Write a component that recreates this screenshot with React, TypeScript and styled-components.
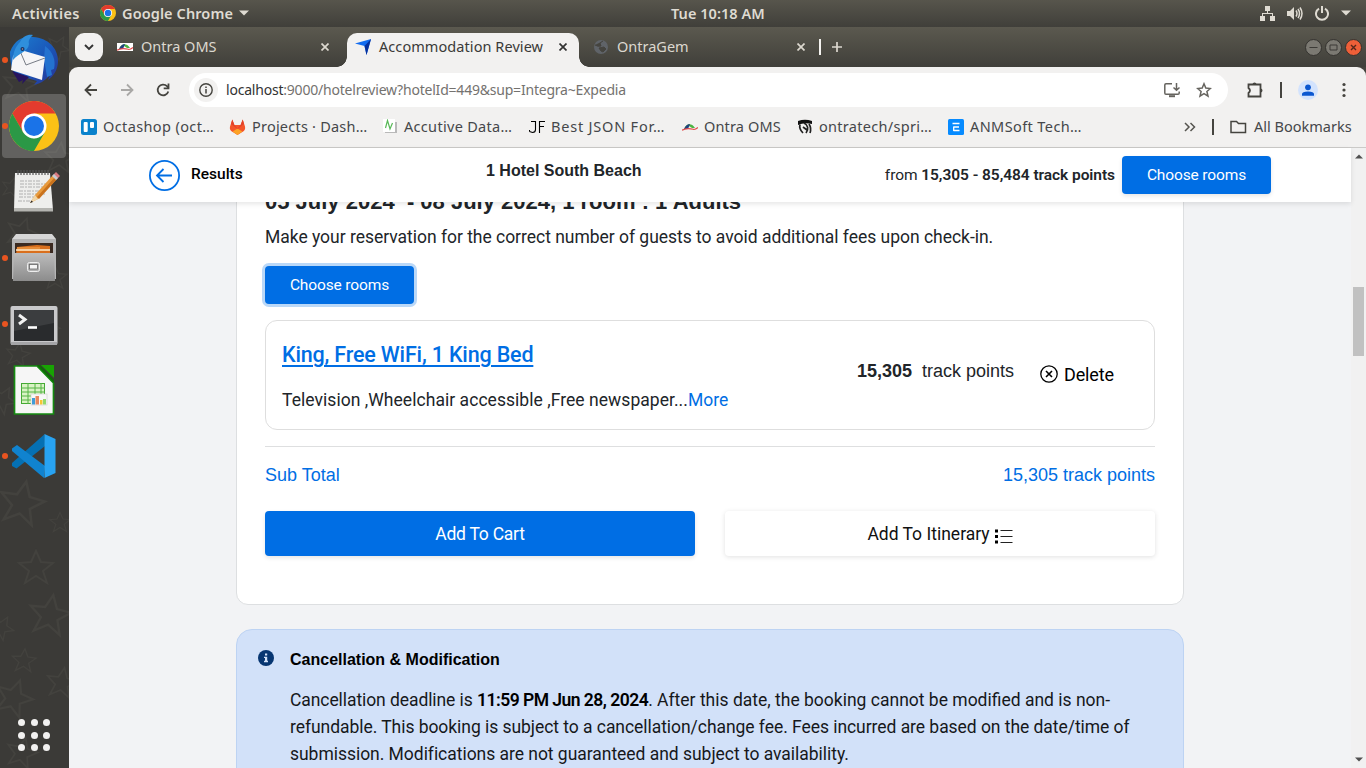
import React from "react";
import styled, { createGlobalStyle, css } from "styled-components";

const ui = `"Noto Sans", "Open Sans", sans-serif`;
const brand = `Roboto, sans-serif`;
const arial = `"Liberation Sans", Arial, sans-serif`;
const blue = "#006ee4";

const Global = createGlobalStyle`
  *{box-sizing:border-box}
  html,body{margin:0;height:768px;overflow:hidden;background:#3b3a37}
  button{font:inherit;border:0;padding:0;background:none;color:inherit}
  svg{display:block;flex:none}
  h2,h3,p{margin:0}
`;

const Desktop = styled.div`
  width:1366px;height:768px;display:flex;flex-direction:column;overflow:hidden;
  font-family:${ui};
`;

const SystemBar = styled.header`
  height:27px;flex:none;display:grid;grid-template-columns:659px auto 1fr;align-items:center;
  padding:0 15px 1px 12px;background:linear-gradient(#57554c,#403f3a);color:#dfdbd2;
  font-size:14.5px;font-weight:600;line-height:25px;
`;
const SystemGroup = styled.div<{ $end?: boolean; $gap: number }>`
  display:flex;align-items:center;gap:${p => p.$gap}px;
  justify-content:${p => (p.$end ? "flex-end" : "flex-start")};
`;
const Label = styled.span<{ $ls?: number; $w?: number }>`
  letter-spacing:${p => p.$ls ?? 0}px;white-space:pre;flex:none;
  ${p => p.$w && css`width:${p.$w}px;`}
`;
const Workspace = styled.div`flex:1;display:flex;min-height:0;`;

const Dock = styled.nav`
  width:69px;flex:none;position:relative;display:flex;flex-direction:column;background:#3b3a37;padding-top:1px;
`;
const Wallpaper = styled.svg`position:absolute;left:0;top:0;`;
const DockItem = styled.div<{ $active?: boolean; $pad?: string }>`
  position:relative;width:64px;height:64px;margin:0 0 2px 2px;border-radius:4px;flex:none;
  display:flex;align-items:center;justify-content:center;padding:${p => p.$pad ?? 0};
  background:${p => (p.$active ? "rgba(255,255,255,.2)" : "transparent")};
`;
const RunningDot = styled.i`
  position:absolute;left:0;top:29px;width:6px;height:6px;border-radius:50%;background:#e95420;
`;
const AppsGrid = styled.div`
  position:relative;margin:auto 0 17px 18px;display:grid;grid-template-columns:repeat(3,7px);gap:5.5px;
`;
const AppsDot = styled.i`width:7px;height:7px;border-radius:50%;background:#f2f1f0;`;

const Browser = styled.main`flex:1;min-width:0;display:flex;flex-direction:column;background:#45433d;`;
const TabStrip = styled.div`
  height:40px;flex:none;display:flex;align-items:center;background:linear-gradient(#5b594f,#403f3a);
  padding-left:6px;color:#dcd8cf;font-size:14.5px;
`;
const TabSearch = styled.button`
  width:28px;height:28px;border-radius:9px;background:#f2f1f0;display:flex;align-items:center;justify-content:center;
`;
const TabTitle = styled(Label)`padding-bottom:2px;`;
const Tab = styled.div<{ $w: number; $active?: boolean }>`
  width:${p => p.$w}px;height:34px;margin-top:6px;display:flex;align-items:center;position:relative;padding-bottom:6px;
  ${p => p.$active && css`
    background:#f2f1f0;color:#3a3a38;border-radius:10px 10px 0 0;
    &::before,&::after{content:"";position:absolute;bottom:0;width:10px;height:10px}
    &::before{left:-10px;background:radial-gradient(circle at 0 0,transparent 9.5px,#f2f1f0 10px)}
    &::after{right:-10px;background:radial-gradient(circle at 100% 0,transparent 9.5px,#f2f1f0 10px)}
  `}
`;
const TabIcon = styled.span<{ $left: number }>`width:16px;margin:0 8px 0 ${p => p.$left}px;flex:none;`;
const TabClose = styled.span<{ $right: number }>`margin-left:auto;margin-right:${p => p.$right}px;`;
const Bar = styled.i<{ $c: string; $m: string }>`
  width:2px;height:16px;background:${p => p.$c};margin:${p => p.$m};flex:none;
`;
const WindowControls = styled.div`margin-left:auto;margin-right:4px;display:flex;gap:3px;`;

const Chrome = styled.div`
  flex:none;height:81px;background:#f2f1f0;border-bottom:1px solid #cbcac8;border-radius:9px 9px 0 0;
`;
const Toolbar = styled.div`height:46px;display:flex;align-items:center;padding-left:14px;`;
const NavIcons = styled.div`display:flex;gap:20px;width:106px;flex:none;`;
const AddressBar = styled.div`
  width:1039px;height:34px;border-radius:17px;background:#fff;display:flex;align-items:center;flex:none;
  padding:0 16px 0 5px;margin-right:19px;color:#74726f;font-size:14px;
  ${Label}{padding-bottom:2px}
`;
const SiteInfo = styled.span`
  width:24px;height:24px;border-radius:50%;background:#f2f1f0;display:flex;align-items:center;justify-content:center;margin-right:8px;
`;
const HostName = styled.span`color:#333;`;
const AddressActions = styled.div`margin-left:auto;display:flex;gap:15px;`;
const Bookmarks = styled.div`
  height:34px;display:flex;align-items:center;padding:0 0 6px 12px;color:#45474a;font-size:14.5px;
  ${Label}{padding-bottom:2px}
`;
const Bookmark = styled.div<{ $w: number }>`width:${p => p.$w}px;flex:none;display:flex;align-items:center;gap:6px;`;

const Viewport = styled.div`flex:1;min-height:0;display:flex;`;
const Page = styled.div`width:1282px;display:flex;flex-direction:column;background:#f2f3f5;color:#212529;font-family:${brand};`;
const PageHeader = styled.header`
  height:54px;flex:none;background:#fff;position:relative;z-index:1;box-shadow:0 2px 5px rgba(0,0,0,.1);
  display:grid;grid-template-columns:337px 1fr auto;align-items:center;padding:0 80px;
`;
const BackLink = styled.div`
  display:flex;align-items:center;gap:11px;color:#000;font-weight:500;font-size:15.5px;line-height:20px;
  ${Label}{margin-top:-3px}
`;
const HotelName = styled.h2`font:bold 16px/20px ${arial};margin-top:-9px;`;
const HeaderPrice = styled.div`display:flex;align-items:center;font-size:15.5px;gap:7px;white-space:pre;b{font-weight:600}`;
const Button = styled.button<{ $kind?: "wide" | "light"; $focus?: boolean }>`
  display:flex;align-items:center;justify-content:center;gap:4px;color:#fff;background:${blue};border-radius:4px;
  width:149px;height:38px;font-size:15.5px;box-shadow:0 2px 4px rgba(0,0,0,.1);
  ${p => p.$kind && css`width:auto;flex:1;height:45px;font-size:17.5px;`}
  ${p => p.$kind === "light" && css`background:#fff;color:#111;box-shadow:0 1px 5px rgba(0,0,0,.12);`}
  ${p => p.$focus && css`box-shadow:0 0 0 3px #bad8f8;`}
`;
const ListIcon = styled.svg`margin-top:4px;`;
const Scroll = styled.div`flex:1;min-height:0;overflow:hidden;padding-left:167px;`;
const StayCard = styled.section`
  width:948px;height:424px;margin-top:-21px;background:#fff;border:1px solid #dddfe1;border-radius:12px;padding:7px 28px;
`;
const StayDates = styled.h2`font:bold 22px/26px ${arial};white-space:pre;`;
const Note = styled.p`font-size:17.5px;line-height:24px;margin:10px 0 17px;white-space:nowrap;`;
const RoomCard = styled.article`
  height:110px;margin-top:16px;border:1px solid #dedede;border-radius:12px;display:flex;padding:0 0 0 16px;
`;
const RoomText = styled.div`width:575px;flex:none;padding-top:20px;font-size:17.5px;`;
const RoomName = styled.h3`
  font-size:21.5px;line-height:28px;font-weight:500;color:${blue};margin-bottom:19px;
  text-decoration:underline;text-decoration-thickness:2px;text-underline-offset:3px;
`;
const Amenities = styled.p`line-height:24px;white-space:nowrap;`;
const More = styled.span`color:${blue};`;
const Price = styled.div`font:18px/24px ${arial};padding-top:38px;width:183px;flex:none;white-space:pre;`;
const Delete = styled.div`
  display:flex;align-items:center;gap:6px;height:24px;margin-top:41px;font-size:18px;color:#000;
`;
const SubTotal = styled.div`
  margin-top:16px;border-top:1px solid #dedfe0;height:65px;padding-top:16px;display:flex;justify-content:space-between;
  font:18px/24px ${arial};color:${blue};
`;
const Actions = styled.div`display:flex;gap:30px;`;
const Policy = styled.section`
  width:948px;height:200px;margin-top:24px;border:1px solid #bdd3f3;border-radius:16px;background:#d2e1f9;
  display:flex;gap:16px;padding:20px 21px;color:#000;
`;
const PolicyTitle = styled.h3`font:bold 16px/20px ${arial};margin-bottom:17px;`;
const PolicyLine = styled.p`
  font-size:17.5px;line-height:27px;white-space:nowrap;color:#16181b;
  b{font-weight:600;color:#000;letter-spacing:-.52px}
`;

const ScrollBar = styled.div`
  width:15px;background:#f1f1f1;display:flex;flex-direction:column;align-items:center;justify-content:space-between;padding:6px 0 6px;
`;
const Thumb = styled.i`width:11px;height:69px;background:#c1c1c1;margin-bottom:273px;`;

const ChromeLogo = ({ s }: { s: number }) => (
  <svg width={s} height={s} viewBox="0 0 48 48">
    <circle cx="24" cy="24" r="24" fill="#fbc116" />
    <path d="M3.2 12A24 24 0 0 1 44.8 12H24L13.6 30Z" fill="#e33b2e" />
    <path d="M3.2 12 13.6 30 24 36 34.4 30 24 48A24 24 0 0 1 3.2 12Z" fill="#2b9846" />
    <circle cx="24" cy="24" r="12" fill="#fff" />
    <circle cx="24" cy="24" r="9.6" fill="#1a73e8" />
  </svg>
);
const Caret = () => <svg width="10" height="6"><path d="M0 .5H10L5 5.5Z" fill="#dfdbd2" /></svg>;
const Cross = ({ c }: { c: string }) => (
  <svg width="8" height="8" stroke={c} strokeWidth="1.7"><path d="M.5.5 7.5 7.5M7.5.5.5 7.5" /></svg>
);

const Thunderbird = () => (
  <svg width="52" height="52" viewBox="0 0 52 52">
    <defs><linearGradient id="tb" x2="1" y2="1"><stop stopColor="#1d7fd0" /><stop offset=".55" stopColor="#1a55b8" /><stop offset="1" stopColor="#2b3190" /></linearGradient></defs>
    <path d="M3 18C8 5 17 2 26 3c15 1 25 11 25 24 0 8-4 15-10 19l2-5c-5 6-11 9-16 10l3-4-10-3C9 45 3 37 3 18Z" fill="url(#tb)" />
    <path d="M38 12c8 6 11 14 9 23l-3 1 1 5-5 2-3-18Z" fill="#2472cf" />
    <path d="M6 22 14 16 38 23 35 46 4 36Z" fill="#f5f5f7" />
    <path d="M5 37 12 48 16 46 15 50 22 43Z" fill="#27145f" />
    <path d="M13 17 19 31 38 24" fill="none" stroke="#777c86" strokeWidth="1" />
    <path d="M13 8C16 2 21 0 26 1c-3 3-5 5-4 9-1 8-9 8-16 16 0-8 3-14 7-18Z" fill="#2f8fdc" />
    <circle cx="15.500" cy="15" r="2" fill="#163264" /><circle cx="15.500" cy="15" r=".8" fill="#b99" />
  </svg>
);
const Notepad = () => (
  <svg width="50" height="50" viewBox="0 0 50 50">
    <path d="M5 6H40L43 43H4Z" fill="#eeeeec" /><path d="M4 41H43V44.500H4Z" fill="#b4b4b0" />
    <path d="M8 3v5M11 3v5M14 3v5M17 3v5M20 3v5M23 3v5M26 3v5M29 3v5M32 3v5M35 3v5M38 3v5" stroke="#555" strokeWidth="1.2" />
    <path d="M10 14h20M10 17h26M10 20h24M9 24h26M9 27h26M9 30h16M8 34h12" stroke="#b0b0b0" strokeWidth="1.2" strokeDasharray="4 1 2 1" />
    <path d="M25 28 43 8 47 12 28 32 20 36Z" fill="#e89a3c" /><path d="M27 30 45 10 47 12 29 32Z" fill="#c9721c" />
    <path d="M43 8 46 5 50 9 47 12Z" fill="#d97a80" /><path d="M42 9 44 7 48 11 46 13Z" fill="#c8ccd0" />
    <path d="M25 28 28 32 20 36Z" fill="#f0d6a8" /><path d="M21.500 33.500 23 35 20 36Z" fill="#222" />
  </svg>
);
const Files = () => (
  <svg width="48" height="50" viewBox="0 0 48 50">
    <defs><linearGradient id="fc" y2="1" x2="0"><stop stopColor="#bcbcbc" /><stop offset="1" stopColor="#8c8c8c" /></linearGradient></defs>
    <path d="M6 1H42L46 6V20H2V6Z" fill="#d6d6d6" /><path d="M2 6H46V46H2Z" fill="#b5b5b5" />
    <path d="M5 10H43V21H5Z" fill="#3b2a20" /><path d="M7 14 27 12 40 13V21H6Z" fill="#d96f1d" />
    <path d="M6 17H40" stroke="#fff1d0" strokeWidth="1.5" /><path d="M7 15H30" stroke="#f6aa52" />
    <path d="M4 20H44L45 48H3Z" fill="url(#fc)" />
    <rect x="17.500" y="29.500" width="12" height="9" rx="2" fill="#b2b2b2" stroke="#eee" />
    <rect x="19.500" y="31.500" width="8" height="4.500" fill="#f5f5f5" stroke="#666" strokeWidth=".8" />
  </svg>
);
const Terminal = () => (
  <svg width="48" height="42" viewBox="0 0 48 42">
    <rect x=".5" y="1" width="47" height="39" rx="2" fill="#c9c9cb" /><rect x="1" y="37" width="46" height="3" fill="#a5a5a7" />
    <rect x="4" y="5" width="40" height="31" fill="#292b2d" /><path d="M4 5H44V18L4 26Z" fill="#3b3d3f" />
    <path d="M9 10 15 14.500 9 19" fill="none" stroke="#f2f2f2" strokeWidth="3" /><path d="M18 22.500H27" stroke="#fff" strokeWidth="2.600" />
  </svg>
);
const Calc = () => (
  <svg width="42" height="50" viewBox="0 0 42 50">
    <path d="M1.500 1H24L40.500 18V49H1.500Z" fill="#f6f6f6" stroke="#158a10" strokeWidth="1.700" />
    <path d="M28 0H41V13Z" fill="#18a303" /><path d="M24 0 41 18V15L27 0Z" fill="#0c6e04" />
    <rect x="8.500" y="18.500" width="23" height="20" fill="#d9f3c4" stroke="#44a933" />
    <path d="M8 23H32M8 27H32M8 31H32M8 35H32M15 18V39M22 18V39M28 18V39" stroke="#54b444" />
    <rect x="18" y="29" width="16" height="11" fill="#f8f8f8" stroke="#ccc" strokeWidth=".6" />
    <path d="M19 39.500V33h3v6.500Z" fill="#3f9bd8" /><path d="M22.500 39.500V31h3.500v8.500Z" fill="#e8875f" /><path d="M27 39.500V35h2.500v4.500Z" fill="#f5c733" /><path d="M30 39.500V34h3v5.500Z" fill="#92d96b" />
  </svg>
);
const VSCode = () => (
  <svg width="44" height="44" viewBox="0 0 44 44">
    <path d="M32.500.3 0 29 0 32 4.500 34.500 33 12Z" fill="#0570b3" />
    <path d="M5 11 0 14.500V17L32 44 33 32Z" fill="#1083cf" />
    <path d="M32.500 0 43.500 5V39L32.500 44Z" fill="#28a3f2" />
  </svg>
);
const GitLab = () => (
  <svg width="17" height="16" viewBox="0 0 17 16">
    <path d="M3.300.5 5.400 6H11.600L13.700.5 16 7.500C16.600 10 15.500 11.500 14.500 12.300L8.500 16 2.500 12.300C1.500 11.500.4 10 1 7.500Z" fill="#f4552a" />
    <path d="M8.500 16 3.600 12.600 8.500 9.500 13.400 12.600Z" fill="#fca326" /><path d="M3.300.5 5.400 6 8.500 9.500 11.600 6 13.700.5 15 5 8.500 10 2 5Z" fill="#e2432a" />
  </svg>
);
const OntraMark = ({ box }: { box?: boolean }) => (
  <svg width="16" height="16" viewBox="0 0 16 16">
    {box && <rect y="4" width="16" height="8" fill="#fff" />}
    <path d="M2 10C4 5 9 3 13 9L10 9 7 7Z" fill="#4cb443" /><path d="M2 10C4 6 6 5 8 5L6 10Z" fill="#21417f" />
    <path d="M0 11.300C5 8 10 10 12 10.500 14 10.500 15 9.500 16 8.500" fill="none" stroke="#e14b4b" strokeWidth="1.200" />
  </svg>
);
const Trello = () => (
  <svg width="16" height="16"><rect width="16" height="16" rx="2.500" fill="#0a82cc" /><rect x="2.700" y="3" width="4" height="10" rx="1" fill="#fff" /><rect x="9" y="3" width="4" height="6" rx="1" fill="#fff" /></svg>
);
const Accutive = () => (
  <svg width="16" height="16"><path d="M3 3H15V14H3Z" fill="#b9b9b9" /><rect x="1" y="0" width="12" height="13" fill="#fff" /><path d="M3.500 9 5.500 1.500 8 10 10.500 4" fill="none" stroke="#58b957" strokeWidth="1.200" /></svg>
);
const JsonMark = () => (
  <svg width="16" height="16" fill="none" stroke="#000" strokeWidth="1.100"><path d="M2 2.500H6.500V10.500Q6.500 13.500 3.500 13.500L.5 12.500M.5 11V12.500M10.500 14V2.500H16M10.500 7.500H15" /></svg>
);
const Spring = () => (
  <svg width="16" height="16"><path d="M1 2Q8-.5 15 2V5Q7 3 1 6Z" fill="#111" /><path d="M3 5.500C2 9 4 12 6 14M7 4C11 6 12 10 9 14M6 8 10 11M12 5C14 8 14 11 13 14" fill="none" stroke="#222" strokeWidth="1.700" /></svg>
);
const AnmMark = () => (
  <svg width="16" height="16"><rect width="16" height="16" rx="1.500" fill="#078bff" /><path d="M4.500 4.500H11.500M5.500 8H11M5.500 11.500H11.500M5.700 7.500V12" stroke="#fff" strokeWidth="1.300" /></svg>
);

const star = "M0-16 5-5 17-4 7 4 11 16 0 9-11 16-7 4-17-4-5-5Z";
const starSpots: [number, number, number, number][] = [
  [20, 57, 1, 10], [58, 20, .7, 30], [22, 205, .9, 20], [55, 250, .7, 0], [12, 160, .6, 15], [60, 130, .9, 5], [18, 327, .7, 10], [50, 300, .6, 20], [22, 475, 1.300, 12], [3, 372, .8, 30],
  [60, 495, .6, 0], [36, 540, 1, 0], [50, 587, 1.200, 10], [24, 633, .7, 5], [14, 670, 1.100, 20], [62, 655, .9, 10], [2, 600, .7, 30], [22, 725, .9, 15],
];

const dock = [
  { icon: <Thunderbird />, run: true, pad: "0 2px 0 0" },
  { icon: <ChromeLogo s={50} />, run: true, active: true },
  { icon: <Notepad />, run: false, pad: "0 0 0 2px" },
  { icon: <Files />, run: true },
  { icon: <Terminal />, run: true, pad: "4px 0 0" },
  { icon: <Calc />, run: false },
  { icon: <VSCode />, run: true },
];
const bookmarks = [
  { icon: <Trello />, text: "Octashop (oct…", w: 148, ls: .38 },
  { icon: <GitLab />, text: "Projects · Dash…", w: 153, ls: .22 },
  { icon: <Accutive />, text: "Accutive Data…", w: 147, ls: .31 },
  { icon: <JsonMark />, text: "Best JSON For…", w: 153, ls: .8 },
  { icon: <OntraMark />, text: "Ontra OMS", w: 115, ls: .15 },
  { icon: <Spring />, text: "ontratech/spri…", w: 151, ls: .3 },
  { icon: <AnmMark />, text: "ANMSoft Tech…", w: 236, ls: .4 },
];

export default function App() {
  return (
    <Desktop>
      <Global />
      <SystemBar>
        <SystemGroup $gap={6}>
          <Label $w={82} $ls={.3}>Activities</Label>
          <ChromeLogo s={16} />
          <Label $ls={.1}>Google Chrome</Label>
          <Caret />
        </SystemGroup>
        <Label $ls={.05}>Tue 10:18 AM</Label>
        <SystemGroup $gap={12} $end>
          <svg width="15" height="15" fill="#dfdbd2"><path d="M5 0h5v5H8v2h5v3h2v5h-5v-5h2V8H3v2h2v5H0v-5h2V7h5V5H5Z" /></svg>
          <svg width="16" height="15"><path d="M0 5H3L7 1V14L3 10H0Z" fill="#dfdbd2" /><path d="M9 4.500Q11 7.500 9 10.500M11 3Q14 7.500 11 12M13 1.500Q17 7.500 13 13.500" fill="none" stroke="#dfdbd2" strokeWidth="1.500" /></svg>
          <svg width="14" height="15" fill="none" stroke="#dfdbd2" strokeWidth="2"><path d="M4 2.600A6 6 0 1 0 10 2.600M7 0V7" /></svg>
          <Caret />
        </SystemGroup>
      </SystemBar>
      <Workspace>
        <Dock>
          <Wallpaper width="69" height="741" fill="none" stroke="#43423e" strokeWidth="2">
            {starSpots.map(([x, y, s, r], i) => <path key={i} d={star} transform={`translate(${x} ${y}) scale(${s}) rotate(${r})`} />)}
          </Wallpaper>
          {dock.map((d, i) => (
            <DockItem key={i} $active={d.active} $pad={d.pad}>{d.run && <RunningDot />}{d.icon}</DockItem>
          ))}
          <AppsGrid>{Array.from({ length: 9 }, (_, i) => <AppsDot key={i} />)}</AppsGrid>
        </Dock>
        <Browser>
          <TabStrip>
            <TabSearch><svg width="10" height="7" fill="none" stroke="#333" strokeWidth="1.900"><path d="M1 1 5 5 9 1" /></svg></TabSearch>
            <Tab $w={244}>
              <TabIcon $left={14}><OntraMark box /></TabIcon><TabTitle>Ontra OMS</TabTitle>
              <TabClose $right={18}><Cross c="#dcd8cf" /></TabClose>
            </Tab>
            <Tab $w={232} $active>
              <TabIcon $left={8}>
                <svg width="16" height="16"><path d="M0 4.500 16 0 11.500 16 9.500 7Z" fill="#126cf0" /><path d="M16 0 11.500 16 9.500 7Z" fill="#06309c" /></svg>
              </TabIcon>
              <TabTitle $ls={.07}>Accommodation Review</TabTitle>
              <TabClose $right={12}><Cross c="#333" /></TabClose>
            </Tab>
            <Tab $w={240}>
              <TabIcon $left={14}>
                <svg width="16" height="16"><circle cx="8" cy="8" r="7" fill="#5f6368" /><path d="M2 6Q5 8 8 7L7 4 10 2M8 12 6 9 11 8 13 10 10 13Z" fill="#45443f" stroke="#45443f" /></svg>
              </TabIcon>
              <TabTitle>OntraGem</TabTitle>
              <TabClose $right={14}><Cross c="#dcd8cf" /></TabClose>
            </Tab>
            <Bar $c="#f4f3f0" $m="0 11px 0 0" />
            <svg width="10" height="10" stroke="#dcd8cf" strokeWidth="1.700"><path d="M5 0V10M0 5H10" /></svg>
            <WindowControls>
              <svg width="17" height="17"><circle cx="8.500" cy="8.500" r="8" fill="#7b7972" stroke="#34332f" /><path d="M4.500 8.500H12.500" stroke="#3c3b37" /></svg>
              <svg width="17" height="17"><circle cx="8.500" cy="8.500" r="8" fill="#7b7972" stroke="#34332f" /><path d="M5 6H12V11H5Z" fill="none" stroke="#3c3b37" /></svg>
              <svg width="17" height="17"><circle cx="8.500" cy="8.500" r="8" fill="#ee5f38" stroke="#34332f" /><path d="M6 6 11 11M11 6 6 11" stroke="#55271a" strokeWidth="1.400" /></svg>
            </WindowControls>
          </TabStrip>
          <Chrome>
            <Toolbar>
              <NavIcons>
                <svg width="16" height="16" fill="none" stroke="#45443f" strokeWidth="1.800"><path d="M14 8H3M8 2.500 2.500 8 8 13.500" /></svg>
                <svg width="16" height="16" fill="none" stroke="#a9a8a6" strokeWidth="1.800"><path d="M2 8H13M8 2.500 13.500 8 8 13.500" /></svg>
                <svg width="16" height="16" fill="none" stroke="#45443f" strokeWidth="1.800"><path d="M13.300 9.500A5.400 5.400 0 1 1 12 4.200L13.500 6" /><path d="M13.500 1.500V6.300H8.700" /></svg>
              </NavIcons>
              <AddressBar>
                <SiteInfo><svg width="14" height="14"><circle cx="7" cy="7" r="6.200" fill="none" stroke="#45443f" strokeWidth="1.400" /><path d="M7 6V10.500M7 3.500V5" stroke="#45443f" strokeWidth="1.500" /></svg></SiteInfo>
                <Label $ls={-.21}><HostName>localhost</HostName>:9000/hotelreview?hotelId=449&amp;sup=Integra~Expedia</Label>
                <AddressActions>
                  <svg width="18" height="16" fill="none" stroke="#66645f" strokeWidth="1.500"><path d="M9 1.800H3Q1.800 1.800 1.800 3V11Q1.800 12.300 3 12.300H15Q16.200 12.300 16.200 11V9.500M13.500 1V8M10.500 5.500 13.500 8.300 16.500 5.500" /><path d="M6 14.200H12" strokeWidth="2" /></svg>
                  <svg width="16" height="16" fill="none" stroke="#66645f" strokeWidth="1.500"><path d="M8 1.800 9.800 6.100 14.400 6.500 10.900 9.500 12 14.100 8 11.600 4 14.100 5.100 9.500 1.600 6.500 6.200 6.100Z" /></svg>
                </AddressActions>
              </AddressBar>
              <svg width="17" height="18" fill="none" stroke="#45443f" strokeWidth="1.800"><path d="M1.500 3.500H13.500V15.500H1.500V12Q4.500 9.500 1.500 7Z" /><path d="M5.500 3.500A2 2 0 0 1 9.500 3.500ZM13.500 7.500A2 2 0 0 1 13.500 11.500Z" fill="#45443f" stroke="none" /></svg>
              <Bar $c="#45443f" $m="0 16px" />
              <svg width="20" height="20"><circle cx="10" cy="10" r="10" fill="#d3e3fd" /><circle cx="10" cy="7.300" r="2.900" fill="#0b57d0" /><path d="M4 15.800V14Q4 11.500 10 11.500T16 14V15.800Z" fill="#0b57d0" /></svg>
              <svg width="48" height="16" fill="#45443f"><circle cx="26" cy="2.500" r="1.600" /><circle cx="26" cy="8" r="1.600" /><circle cx="26" cy="13.500" r="1.600" /></svg>
            </Toolbar>
            <Bookmarks>
              {bookmarks.map(b => <Bookmark key={b.text} $w={b.w}>{b.icon}<Label $ls={b.ls}>{b.text}</Label></Bookmark>)}
              <svg width="12" height="10" fill="none" stroke="#55544f" strokeWidth="1.500"><path d="M1 1 5 5 1 9M6.500 1 10.500 5 6.500 9" /></svg>
              <Bar $c="#45443f" $m="0 16px 0 16px" />
              <svg width="24" height="14" fill="none" stroke="#45443f" strokeWidth="1.500"><path d="M1 1.500H6.500L8.500 3.500H15.500V12.500H1Z" /></svg>
              <Label>All Bookmarks</Label>
            </Bookmarks>
          </Chrome>
          <Viewport>
            <Page>
              <PageHeader>
                <BackLink>
                  <svg width="31" height="31" fill="none" stroke={blue} strokeWidth="1.800"><circle cx="15.500" cy="15.500" r="14.600" /><path d="M23 15.500H8.500M14.500 9 8 15.500 14.500 22" /></svg>
                  <Label>Results</Label>
                </BackLink>
                <HotelName>1 Hotel South Beach</HotelName>
                <HeaderPrice>
                  <Label $ls={-.06}>from <b>15,305 - 85,484 track points</b></Label>
                  <Button><Label $ls={-.13}>Choose rooms</Label></Button>
                </HeaderPrice>
              </PageHeader>
              <Scroll>
                <StayCard>
                  <StayDates>{"05 July 2024  - 08 July 2024, 1 room : 1 Adults"}</StayDates>
                  <Note><Label $ls={-.025}>Make your reservation for the correct number of guests to avoid additional fees upon check-in.</Label></Note>
                  <Button $focus><Label $ls={-.13}>Choose rooms</Label></Button>
                  <RoomCard>
                    <RoomText>
                      <RoomName><Label $ls={-.17}>King, Free WiFi, 1 King Bed</Label></RoomName>
                      <Amenities><Label $ls={.045}>Television ,Wheelchair accessible ,Free newspaper...<More>More</More></Label></Amenities>
                    </RoomText>
                    <Price><b>15,305</b>{"  track points"}</Price>
                    <Delete>
                      <svg width="18" height="18" fill="none" stroke="#000" strokeWidth="1.300"><circle cx="9" cy="9" r="8.200" /><path d="M6 6 12 12M12 6 6 12" strokeWidth="1.600" /></svg>
                      <Label $ls={-.15}>Delete</Label>
                    </Delete>
                  </RoomCard>
                  <SubTotal><span>Sub Total</span><span>15,305 track points</span></SubTotal>
                  <Actions>
                    <Button $kind="wide"><Label $ls={-.25}>Add To Cart</Label></Button>
                    <Button $kind="light">
                      <Label>Add To Itinerary</Label>
                      <ListIcon width="19" height="16"><path d="M1 1.500h3v3H1ZM1 7h3v3H1ZM1 12.500h3v3H1Z" fill="#000" /><path d="M6.500 2.500H18.500M6.500 8.500H18.500M6.500 14.500H18.500" stroke="#222" strokeWidth="1.200" /></ListIcon>
                    </Button>
                  </Actions>
                </StayCard>
                <Policy>
                  <svg width="16" height="16"><circle cx="8" cy="8" r="8" fill="#073672" /><path d="M7 3.500h2.200v2H7ZM6 6.700h3.200v4H10v1.500H6v-1.500h1V8H6Z" fill="#d2e1f9" /></svg>
                  <div>
                    <PolicyTitle>Cancellation &amp; Modification</PolicyTitle>
                    <PolicyLine><Label $ls={-.08}>Cancellation deadline is </Label><b>11:59 PM Jun 28, 2024</b><Label>. After this date, the booking cannot be modified and is non-</Label></PolicyLine>
                    <PolicyLine><Label $ls={-.05}>refundable. This booking is subject to a cancellation/change fee. Fees incurred are based on the date/time of</Label></PolicyLine>
                    <PolicyLine><Label $ls={-.035}>submission. Modifications are not guaranteed and subject to availability.</Label></PolicyLine>
                  </div>
                </Policy>
              </Scroll>
            </Page>
            <ScrollBar>
              <svg width="8" height="5"><path d="M0 4.500H8L4 .5Z" fill="#505050" /></svg>
              <Thumb />
              <svg width="8" height="5"><path d="M0 .5H8L4 4.500Z" fill="#505050" /></svg>
            </ScrollBar>
          </Viewport>
        </Browser>
      </Workspace>
    </Desktop>
  );
}
